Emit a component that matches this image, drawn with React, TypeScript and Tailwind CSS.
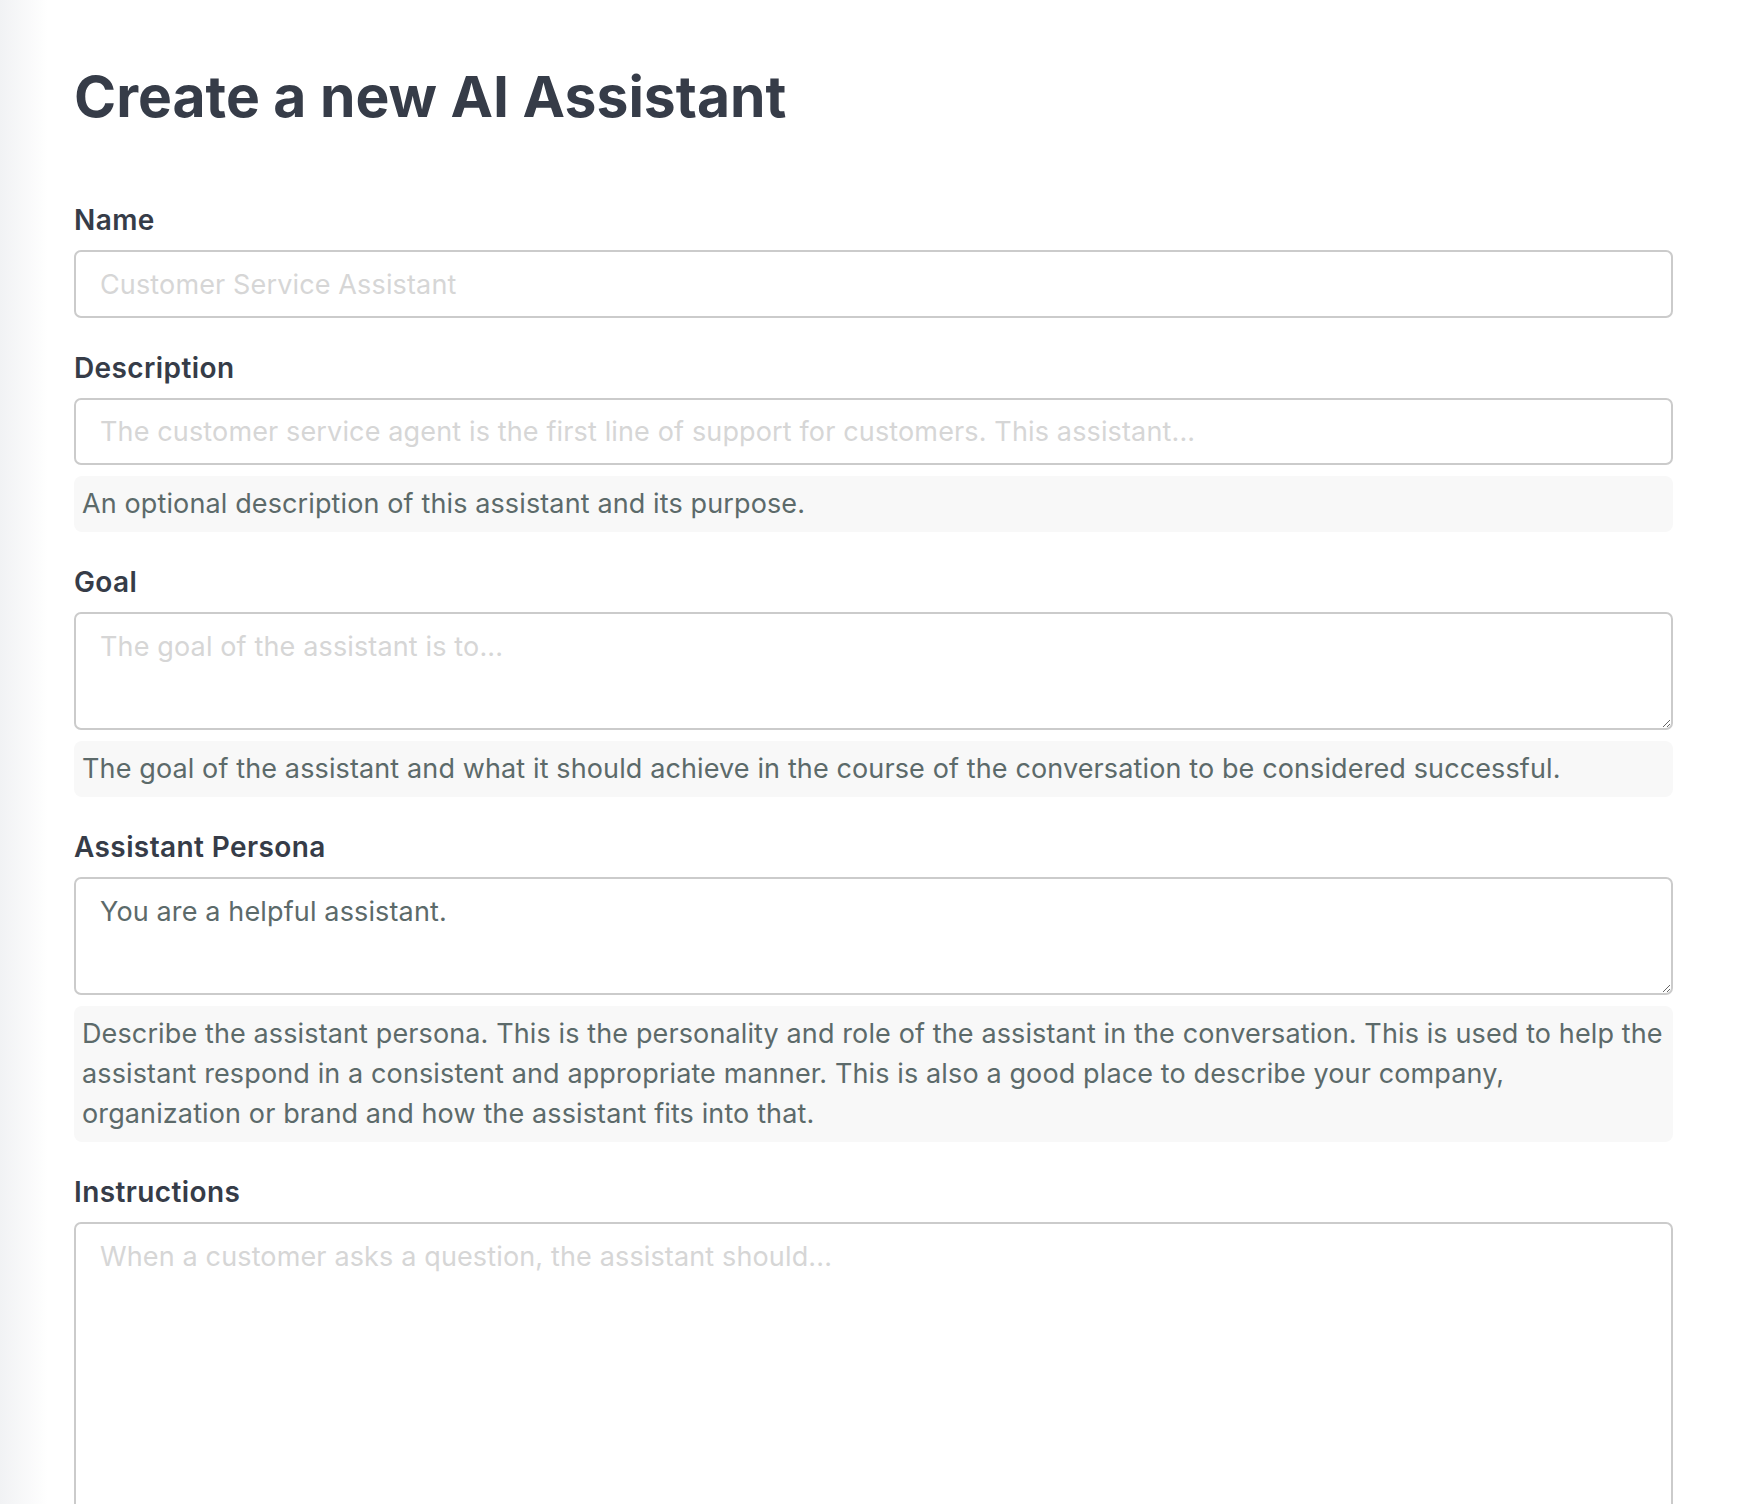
import React from 'react';

const font = { fontFamily: 'Inter, "Noto Sans", "Liberation Sans", sans-serif' };

interface FieldProps {
  label: string;
  help?: string;
  children: React.ReactNode;
}

const Field: React.FC<FieldProps> = ({ label, help, children }) => (
  <div className="flex flex-col">
    <label className="text-[28px] leading-[36px] font-semibold tracking-[0.4px] text-[#363c48]">{label}</label>
    <div className="mt-3 flex">{children}</div>
    {help && (
      <p className="mt-[11px] rounded-lg bg-[#f8f8f8] pl-2 pr-1 py-2 text-[27px] leading-[40px] tracking-[0.12px] text-[#5c6a6a]">
        {help}
      </p>
    )}
  </div>
);

const inputCls =
  'w-full rounded-[7px] border-2 border-[#cbcbcb] bg-white px-6 text-[27px] tracking-[0.14px] text-[#5c6a6a] placeholder:text-[#d6d6d6] outline-none';

export default function App() {
  return (
    <div className="flex min-h-screen bg-white" style={font}>
      {/* faint sidebar shadow */}
      <div className="w-12 shrink-0 bg-gradient-to-r from-[#f1f2f4] to-white" />

      <main className="flex-1 pl-[26px] pr-[87px] pt-[63px] pb-10">
        <h1 className="text-[57px] leading-[67px] font-bold text-[#363c48]">
          Create a new AI Assistant
        </h1>

        <form className="mt-[72px] flex flex-col gap-8">
          <Field label="Name">
            <input className={`${inputCls} h-[68px]`} placeholder="Customer Service Assistant" />
          </Field>

          <Field label="Description" help="An optional description of this assistant and its purpose.">
            <input
              className={`${inputCls} h-[67px]`}
              placeholder="The customer service agent is the first line of support for customers. This assistant..."
            />
          </Field>

          <Field
            label="Goal"
            help="The goal of the assistant and what it should achieve in the course of the conversation to be considered successful."
          >
            <textarea
              className={`${inputCls} h-[118px] pt-[15px] pb-3 leading-[36px]`}
              placeholder="The goal of the assistant is to..."
            />
          </Field>

          <Field
            label="Assistant Persona"
            help="Describe the assistant persona. This is the personality and role of the assistant in the conversation. This is used to help the assistant respond in a consistent and appropriate manner. This is also a good place to describe your company, organization or brand and how the assistant fits into that."
          >
            <textarea
              className={`${inputCls} h-[118px] pt-[15px] pb-3 leading-[36px]`}
              defaultValue="You are a helpful assistant."
            />
          </Field>

          <Field label="Instructions">
            <textarea
              className={`${inputCls} h-[420px] pt-[15px] pb-3 leading-[36px]`}
              placeholder="When a customer asks a question, the assistant should..."
            />
          </Field>
        </form>
      </main>
    </div>
  );
}
